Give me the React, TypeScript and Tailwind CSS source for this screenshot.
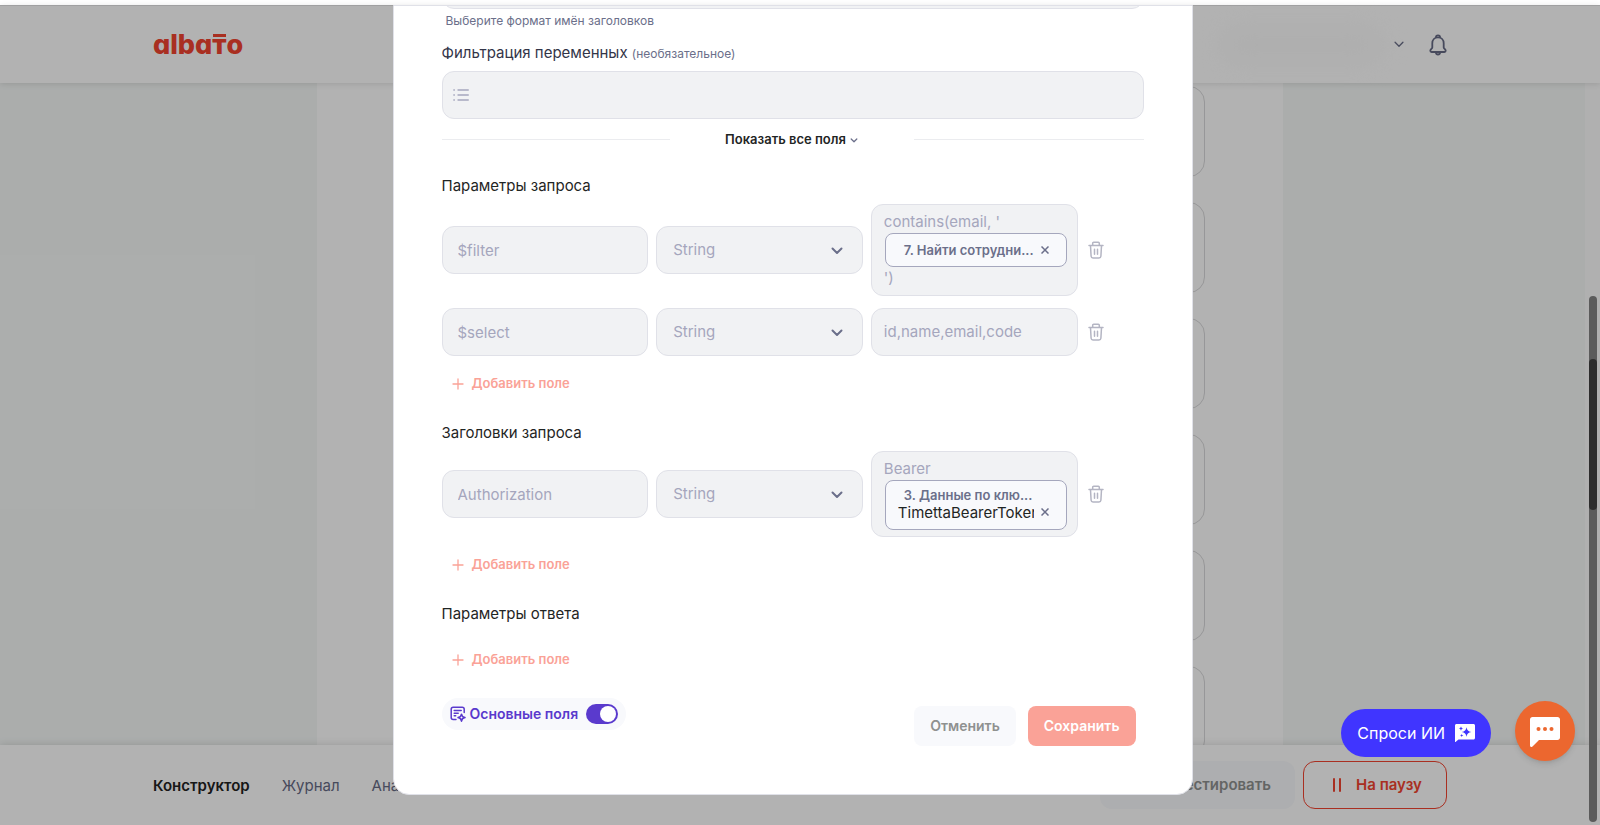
import type { ReactNode } from 'react'

const cards = [1, 2, 3, 4, 5, 6]

const fieldBox = 'rounded-xl border border-[#e0e1e8] bg-[#f1f2f4]'

function ChevronDown({ className, width = 2 }: { className: string; width?: number }) {
	return (
		<svg viewBox="0 0 12 8" fill="none" stroke="currentColor" strokeWidth={width} className={className}>
			<path d="M1.5 1.5 6 6l4.500-4.500" strokeLinecap="round" strokeLinejoin="round" />
		</svg>
	)
}

function TrashButton() {
	return (
		<button aria-label="Удалить поле" className="ml-0.5 w-4 text-[#b4b5c3]">
			<svg viewBox="0 0 16 18" fill="none" stroke="currentColor" strokeWidth="1.500" className="h-[18px] w-4">
				<path d="M1 4.500h14" strokeLinecap="round" />
				<path d="M4.700 4.300V2.200c0-.6.4-1 1-1h4.600c.6 0 1 .4 1 1v2.100" />
				<path d="m2.500 4.700.6 10.500c.1 1.100.8 1.800 1.900 1.800h6c1.100 0 1.800-.7 1.900-1.800l.6-10.500" />
				<path d="M6.500 8.200v5M9.500 8.200v5" strokeLinecap="round" />
			</svg>
		</button>
	)
}

function AddField() {
	return (
		<button className="flex h-6 items-center gap-2 self-start pl-2.5 text-[13px] font-semibold text-[#faa297]">
			<svg viewBox="0 0 12 12" stroke="currentColor" strokeWidth="1.300" strokeLinecap="round" className="h-3 w-3">
				<path d="M6 1v10M1 6h10" />
			</svg>
			Добавить поле
		</button>
	)
}

function Chip({ title, value }: { title: string; value?: string }) {
	return (
		<span className={`${value ? 'h-[50px] pb-[3px]' : 'h-[34px]'} mx-px flex items-center rounded-lg border border-[#a5a7bd] bg-[#f8f9fc] pl-3 pr-4`}>
			<span className="min-w-0 flex-1">
				<span className="block pl-1.5 text-[13px] leading-[18px] font-semibold whitespace-nowrap text-[#6b6f8a]">{title}</span>
				{value && (
					<span className="block overflow-hidden text-[15px] leading-[18px] whitespace-nowrap text-[#1f2524]">{value}</span>
				)}
			</span>
			<button aria-label="Убрать" className={`${value ? 'mt-4' : ''} ml-1.5 p-px text-[#6b6f8a]`}>
				<svg viewBox="0 0 8 8" stroke="currentColor" strokeWidth="1.500" className="h-2 w-2">
					<path d="m.5.5 7 7M7.500.5l-7 7" />
				</svg>
			</button>
		</span>
	)
}

function FieldRow({ name, children }: { name: string; children: ReactNode }) {
	return (
		<div className="grid grid-cols-[1fr_1fr_1fr_58px] items-center gap-2">
			<input
				aria-label="Имя поля"
				disabled
				defaultValue={name}
				className={`${fieldBox} h-12 w-full min-w-0 px-[15px] text-[15px] text-[#a5a6bd]`}
			/>
			<div className="relative min-w-0">
				<select
					aria-label="Тип поля"
					disabled
					className={`${fieldBox} h-12 w-full appearance-none px-4 text-[15px] text-[#a5a6bd] opacity-100`}
				>
					<option>String</option>
				</select>
				<ChevronDown className="pointer-events-none absolute top-[21px] right-5 h-2 w-3 text-[#6b6f8a]" />
			</div>
			{children}
			<TrashButton />
		</div>
	)
}

function Logo() {
	return (
		<a href="#" aria-label="albato" className="flex text-[27px] leading-8 font-extrabold text-[#f24430] [font-feature-settings:'cv11']">
			alba
			<span className="relative">
				т
				<span className="absolute inset-x-px top-[5px] h-[3px] bg-[#f24430]" />
			</span>
			o
		</a>
	)
}

function Header() {
	return (
		<header className="relative z-10 h-[78px] shrink-0 border-t border-[#e5e5e7] bg-white px-6 shadow-[0_1px_6px_rgba(0,0,0,0.12)]">
			<div className="mx-auto flex h-full max-w-[1294px] items-center justify-between">
				<Logo />
				<div className="flex items-center gap-6">
					<button aria-label="Аккаунт" className="flex items-center gap-3 text-[#666a85]">
						<span className="h-8 w-40 rounded-full bg-[#fafafa] blur-md" />
						<ChevronDown className="h-[7px] w-3" width={1.5} />
					</button>
					<button aria-label="Уведомления" className="text-[#666a85]">
						<svg viewBox="0 0 18 22" fill="none" stroke="currentColor" strokeWidth="1.800" strokeLinejoin="round" className="h-[22px] w-[18px]">
							<path d="M9 3.400c-3.400 0-5.700 2.500-5.700 5.800v4.200c0 1.300-2 1.900-2 3.400 0 .8.5 1.200 1.300 1.200h12.800c.8 0 1.300-.4 1.300-1.200 0-1.500-2-2.100-2-3.400V9.200c0-3.300-2.300-5.800-5.700-5.800Z" />
							<path d="M6.900 3.600c0-1.400.8-2.300 2.100-2.300s2.100.9 2.100 2.300M6.800 18.300c.2 1.400 1 2.200 2.200 2.200s2-.8 2.200-2.200" />
						</svg>
					</button>
				</div>
			</div>
		</header>
	)
}

function Footer() {
	return (
		<footer className="relative h-20 shrink-0 bg-white px-6 shadow-[0_0_8px_rgba(0,0,0,0.15)]">
			<div className="mx-auto flex h-full max-w-[1294px] items-center justify-between text-[15px]">
				<nav className="flex gap-8 pt-0.5 text-[#666a85]">
					<a href="#" className="font-semibold text-[#222]">Конструктор</a>
					<a href="#">Журнал</a>
					<a href="#">Аналитика</a>
				</nav>
				<div className="flex gap-2">
					<button className="h-12 w-[195px] rounded-xl bg-[#f8f9fc] pr-6 text-right font-semibold text-[#8f9190]">
						Протестировать
					</button>
					<button className="flex h-12 w-36 items-center justify-center gap-3.5 rounded-xl border border-[#f24430] pl-1 font-semibold text-[#f24430]">
						<svg viewBox="0 0 10 14" stroke="currentColor" strokeWidth="2" strokeLinecap="round" className="h-3.5 w-2.5">
							<path d="M2 1v12M8 1v12" />
						</svg>
						На паузу
					</button>
				</div>
			</div>
		</footer>
	)
}

function Modal() {
	return (
		<div role="dialog" className="flex w-[800px] flex-col self-start rounded-b-2xl border border-[#e0e1e8] bg-white px-12 pb-12 text-[15px] text-[#1f2524]">
			{/* tail of the field scrolled out of view */}
			<div className="flex h-[3px] flex-col justify-end overflow-hidden">
				<div className={`${fieldBox} h-12 shrink-0`} />
			</div>
			<p className="mt-1 pl-1 text-xs leading-4 text-[#6b6f8a]">Выберите формат имён заголовков</p>

			<label htmlFor="filter" className="mt-3 leading-6 text-[#333548]">
				Фильтрация переменных <span className="text-xs text-[#6b6f8a]">(необязательное)</span>
			</label>
			<div className={`${fieldBox} mt-1.5 flex h-12 items-center gap-2 px-2.5`}>
				<svg viewBox="0 0 16 14" stroke="#a5a6bd" strokeWidth="1.300" strokeLinecap="round" className="h-3.5 w-4">
					<path d="M5 2h10.300M5 7h10.300M5 12h10.300M.8 2h.6M.8 7h.6M.8 12h.6" />
				</svg>
				<input id="filter" className="min-w-0 flex-1 bg-transparent outline-none" />
			</div>

			<div className="mt-2 flex h-6 items-center justify-between">
				<span className="h-px w-[228px] bg-[#ebecef]" />
				<button className="flex items-center gap-1 pt-0.5 text-[13px] font-semibold">
					Показать все поля
					<ChevronDown className="h-[5px] w-2 text-[#6b6f8a]" />
				</button>
				<span className="h-px w-[230px] bg-[#ebecef]" />
			</div>

			<h3 className="mt-[23px] leading-6">Параметры запроса</h3>
			<div className="mt-1.5 flex flex-col gap-3">
				<FieldRow name="$filter">
					<div className={`${fieldBox} min-w-0 py-1.5 pr-[9px] pl-3 leading-[22px] text-[#a5a6bd]`}>
						contains(email, '
						<Chip title="7. Найти сотрудни..." />
						')
					</div>
				</FieldRow>
				<FieldRow name="$select">
					<div className={`${fieldBox} h-12 min-w-0 px-3 leading-[46px] text-[#a5a6bd]`}>id,name,email,code</div>
				</FieldRow>
			</div>
			<div className="mt-4 flex">
				<AddField />
			</div>

			<h3 className="mt-[25px] leading-6">Заголовки запроса</h3>
			<div className="mt-1.5">
				<FieldRow name="Authorization">
					<div className={`${fieldBox} min-w-0 py-1.5 pr-[9px] pl-3 leading-[22px] text-[#a5a6bd]`}>
						Bearer
						<Chip title="3. Данные по клю..." value="TimettaBearerToken" />
					</div>
				</FieldRow>
			</div>
			<div className="mt-4 flex">
				<AddField />
			</div>

			<h3 className="mt-[25px] leading-6">Параметры ответа</h3>
			<div className="mt-[22px] flex">
				<AddField />
			</div>

			<div className="mt-[26px] flex items-start justify-between">
				<label className="flex h-8 items-center gap-1 rounded-full bg-[#f8f9fc] px-2 text-sm font-semibold text-[#5a3acd]">
					<svg viewBox="0 0 16 16" fill="none" stroke="currentColor" strokeWidth="1.500" strokeLinecap="round" strokeLinejoin="round" className="h-4 w-4">
						<path d="M6 13.500H3.200c-1.400 0-2-.7-2-2V3.200c0-1.400.6-2 2-2h9c1.400 0 2 .6 2 2v3.300" />
						<path d="M4.200 4.500h7M4.200 7.200h4M4.200 9.800h1.500" />
						<path d="M11.500 8.200c.3 2.100 1.200 3.100 3.500 3.400-2.300.3-3.200 1.300-3.500 3.600-.3-2.300-1.200-3.300-3.500-3.600 2.300-.3 3.200-1.300 3.500-3.400Z" />
					</svg>
					Основные поля
					<input type="checkbox" defaultChecked className="sr-only" />
					<span className="ml-1 flex h-5 w-8 items-center justify-end rounded-full bg-[#5a3acd] p-0.5">
						<span className="h-4 w-4 rounded-full bg-white" />
					</span>
				</label>
				<div className="mt-2 mr-2 flex gap-3 text-sm font-semibold">
					<button className="h-10 rounded-lg bg-[#f8f9fc] px-4 text-[#8f9190]">Отменить</button>
					<button className="h-10 rounded-lg bg-[#faa297] px-4 text-white">Сохранить</button>
				</div>
			</div>
		</div>
	)
}

export default function App() {
	return (
		<div className="relative flex h-screen flex-col overflow-hidden bg-white pt-[5px] font-[Inter,sans-serif]">
			<Header />
			<main className="relative min-h-0 flex-1 overflow-hidden bg-[#f5f8f7]">
				<div className="mx-auto flex h-full w-[966px] flex-col gap-[25px] bg-white px-[78px] pt-[3px]">
					{cards.map((card) => (
						<div key={card} className="h-[91px] shrink-0 rounded-2xl border border-[#d9d9db]" />
					))}
				</div>
				<div className="absolute inset-y-0 right-0 w-[15px] bg-[#fcfcfc]" />
			</main>
			<Footer />

			<div className="absolute inset-x-0 top-[5px] bottom-0 z-20 flex justify-center bg-black/30 pr-[15px]">
				<Modal />
			</div>

			{/* scrollbar */}
			<div className="absolute top-[296px] right-[3px] bottom-[3px] z-30 w-2 rounded-full bg-[#5b5b5b] pt-[63px]">
				<div className="h-[151px] rounded-full bg-[#2d2d2d]" />
			</div>

			<div className="absolute right-[25px] bottom-16 z-30 flex items-center gap-6">
				<button className="mt-1 flex h-12 items-center gap-2.5 rounded-full bg-[#4035ff] px-4 text-base text-white">
					Спроси ИИ
					<svg viewBox="0 0 20 18" className="h-[18px] w-5">
						<path d="M1.500 0h17c.8 0 1.500.7 1.500 1.500v12.500c0 .8-.7 1.500-1.500 1.500H3.500L.5 18H0V1.500C0 .7.700 0 1.500 0Z" fill="#fff" />
						<path d="M11.500 3.200c.6 3.100 1.700 4.200 4.800 4.800-3.100.6-4.200 1.700-4.800 4.800-.6-3.100-1.700-4.200-4.800-4.800 3.100-.6 4.200-1.700 4.800-4.800ZM6 2.300c.3 1.500.8 2 2.200 2.300C6.800 4.900 6.300 5.400 6 6.900c-.3-1.500-.8-2-2.200-2.300 1.400-.3 1.900-.8 2.200-2.300ZM6.700 9.800c.2 1.100.6 1.500 1.700 1.700-1.100.2-1.500.6-1.700 1.700-.2-1.100-.6-1.500-1.700-1.700 1.100-.2 1.500-.6 1.700-1.700Z" fill="#4035ff" />
					</svg>
				</button>
				<button aria-label="Чат" className="flex h-[60px] w-[60px] items-center justify-center rounded-full bg-[#ec672f] shadow-md">
					<svg viewBox="0 0 30 30" className="mt-0.5 h-[30px] w-[30px]">
						<path d="M2.500 0h25C28.900 0 30 1.100 30 2.500v18c0 1.400-1.100 2.500-2.500 2.500H9l-6.500 6.600c-1 .9-2.500.3-2.500-1V2.500C0 1.100 1.100 0 2.500 0Z" fill="#fff" />
						<circle cx="8.500" cy="12" r="2" fill="#ec672f" />
						<circle cx="15" cy="12" r="2" fill="#ec672f" />
						<circle cx="21.500" cy="12" r="2" fill="#ec672f" />
					</svg>
				</button>
			</div>
		</div>
	)
}
